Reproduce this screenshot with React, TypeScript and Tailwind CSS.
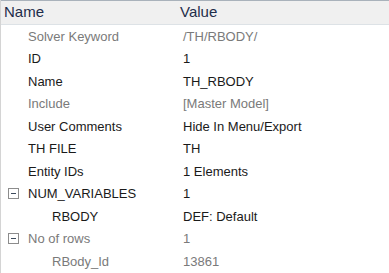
const rows: {
  label: string;
  value: string;
  dim?: boolean;
  level?: number;
  group?: boolean;
}[] = [
  { label: "Solver Keyword", value: "/TH/RBODY/", dim: true },
  { label: "ID", value: "1" },
  { label: "Name", value: "TH_RBODY" },
  { label: "Include", value: "[Master Model]", dim: true },
  { label: "User Comments", value: "Hide In Menu/Export" },
  { label: "TH FILE", value: "TH" },
  { label: "Entity IDs", value: "1 Elements" },
  { label: "NUM_VARIABLES", value: "1", group: true },
  { label: "RBODY", value: "DEF: Default", level: 1 },
  { label: "No of rows", value: "1", group: true, dim: true },
  { label: "RBody_Id", value: "13861", level: 1, dim: true },
];

function Collapse() {
  return (
    <span className="w-[11px] h-[11px] border border-[#8c8c8c] bg-white flex items-center justify-center">
      <span className="w-[5px] h-px bg-[#3c4a5c]" />
    </span>
  );
}

export default function App() {
  return (
    <div
      className="w-[389px] h-[273px] bg-white border-l border-[#d4d4d4] overflow-hidden text-[13px]"
      style={{ fontFamily: '"Liberation Sans", Arial, sans-serif' }}
    >
      <div className="h-[25px] bg-[#f0f0f0] border-t border-[#a9b2bb] border-b border-b-[#dde2e6] flex items-center text-[15px] text-[#1e2d4a]">
        <div className="w-[176px] pl-[3px]">Name</div>
        <div className="pl-[3px]">Value</div>
      </div>
      {rows.map((r) => (
        <div key={r.label} className="h-[22.5px] flex items-center">
          <div className="w-[182px] flex items-center">
            <div className="w-[27px] pl-[7px] flex items-center">{r.group && <Collapse />}</div>
            <span
              className={`${r.level ? "pl-[24px]" : ""} ${r.dim ? "text-[#7a7a7a]" : "text-[#1a1a1a]"}`}
            >
              {r.label}
            </span>
          </div>
          <span className={r.dim ? "text-[#7a7a7a]" : "text-[#1a1a1a]"}>{r.value}</span>
        </div>
      ))}
    </div>
  );
}
